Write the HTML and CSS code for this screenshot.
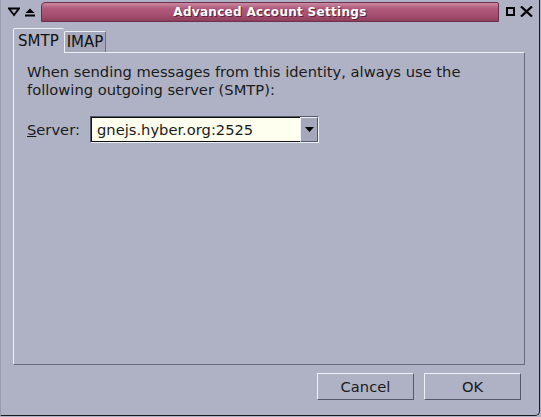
FILE: index.html
```html
<!DOCTYPE html>
<html>
<head>
<meta charset="utf-8">
<link rel="stylesheet" href="styles.css">
</head>
<body>
<div class="window">
  <div class="titlebar">
    <div class="tb-left">
      <svg class="ico" width="12" height="10" viewBox="0 0 12 10"><path d="M1 1.5 H11 L6 8 Z" fill="none" stroke="#000" stroke-width="1.8" stroke-linejoin="miter"/></svg>
      <svg class="ico" width="12" height="10" viewBox="0 0 12 10"><path d="M1.5 6 L6 1.5 L10.5 6 Z" fill="#000"/><rect x="1" y="7.5" width="10" height="2" fill="#000"/></svg>
    </div>
    <div class="title">Advanced Account Settings</div>
    <div class="tb-right">
      <svg class="ico" width="9" height="9" viewBox="0 0 9 9"><rect x="1" y="1" width="7" height="7" fill="none" stroke="#000" stroke-width="2"/></svg>
      <svg class="ico" width="13" height="11" viewBox="0 0 13 11"><path d="M1 0.5 L12 10.5 M12 0.5 L1 10.5" stroke="#000" stroke-width="2.3"/></svg>
    </div>
  </div>
  <div class="content">
    <div class="tabs">
      <div class="tab active">SMTP</div>
      <div class="tab">IMAP</div>
    </div>
    <div class="panel">
      <p class="desc">When sending messages from this identity, always use the<br>following outgoing server (SMTP):</p>
      <div class="row">
        <label class="lbl"><u>S</u>erver:</label>
        <div class="combo">
          <div class="combo-text">gnejs.hyber.org:2525</div>
          <div class="combo-btn"><svg width="9" height="5" viewBox="0 0 9 5"><path d="M0 0 H9 L4.5 5 Z" fill="#000"/></svg></div>
        </div>
      </div>
    </div>
    <div class="buttons">
      <button class="btn">Cancel</button>
      <button class="btn">OK</button>
    </div>
  </div>
</div>
</body>
</html>
```
FILE: styles.css
```css
html, body {
  margin: 0;
  padding: 0;
  background: #afb2c4;
}
body {
  width: 541px;
  height: 417px;
  overflow: hidden;
  font-family: "DejaVu Sans", sans-serif;
}
.window {
  width: 540px;
  height: 416px;
  background: #afb2c4;
  border-right: 1px solid #1a1a22;
  border-bottom: 1px solid #1a1a22;
  border-bottom-right-radius: 5px;
  border-left: 1px solid #9a9db0;
  box-sizing: border-box;
  display: flex;
  flex-direction: column;
}
.titlebar {
  height: 22px;
  display: flex;
  align-items: center;
  padding-top: 1px;
  box-sizing: border-box;
}
.tb-left {
  width: 40px;
  display: flex;
  gap: 4px;
  padding-left: 7px;
  box-sizing: border-box;
}
.tb-right {
  width: 40px;
  display: flex;
  gap: 5px;
  padding-left: 7px;
  box-sizing: border-box;
  align-items: center;
}
.title {
  width: 459px;
  height: 20px;
  background: linear-gradient(#c98aa3 0%, #b25a7c 30%, #a44d6f 70%, #8e3f5d 100%);
  border: 1px solid #6e3049;
  border-top-left-radius: 4px;
  border-top-right-radius: 2px;
  box-sizing: border-box;
  color: #fff;
  font-weight: bold;
  font-size: 12px;
  text-align: center;
  line-height: 18px;
  text-shadow: 1px 1px 0 #5a2238;
  letter-spacing: 0.3px;
}
.content {
  flex: 1;
  padding: 5px 14px 0 12px;
  display: flex;
  flex-direction: column;
}
.tabs {
  display: flex;
  align-items: flex-end;
  height: 25px;
}
.tab {
  font-size: 15px;
  color: #111;
  padding: 0 2px;
  height: 20px;
  line-height: 20px;
  background: #a5a8ba;
  border: 1px solid #eef0f8;
  border-right-color: #6e7082;
  border-bottom: none;
  border-radius: 2px 2px 0 0;
}
.tab.active {
  height: 24px;
  line-height: 24px;
  background: #afb2c4;
  padding: 0 5px 0 4px;
  position: relative;
  z-index: 1;
  margin-bottom: -1px;
  border-right: none;
}
.panel {
  height: 313px;
  border: 1px solid #eef0f8;
  border-right-color: #6a6c7e;
  border-bottom-color: #6a6c7e;
  box-sizing: border-box;
  padding: 10px 13px;
}
.desc {
  margin: 0;
  font-size: 14.7px;
  line-height: 18px;
  color: #1a1a1a;
  white-space: nowrap;
}
.row {
  display: flex;
  align-items: center;
  margin-top: 17px;
}
.lbl {
  font-size: 14.7px;
  color: #1a1a1a;
  width: 63px;
}
.combo {
  display: flex;
  width: 229px;
  height: 27px;
  border: 1px solid #eef0f8;
  border-top-color: #55576a;
  border-left-color: #55576a;
  box-sizing: border-box;
  background: #afb2c4;
}
.combo-text {
  flex: 1;
  background: #fffff0;
  border: 1px solid #111;
  border-right: none;
  font-size: 14.7px;
  line-height: 23px;
  padding-left: 5px;
  color: #1a1a1a;
}
.combo-btn {
  width: 16px;
  display: flex;
  align-items: center;
  justify-content: center;
  background: #a5a8ba;
  border: 1px solid #eef0f8;
  border-right-color: #55576a;
  border-bottom-color: #55576a;
}
.buttons {
  display: flex;
  justify-content: flex-end;
  gap: 10px;
  margin-top: 8px;
  padding-right: 4px;
}
.btn {
  width: 97px;
  height: 27px;
  font-family: "DejaVu Sans", sans-serif;
  font-size: 14.7px;
  color: #1a1a1a;
  background: #afb2c4;
  border: 1px solid #eef0f8;
  border-right-color: #55576a;
  border-bottom-color: #55576a;
  padding: 0;
  border-radius: 0;
}
```
